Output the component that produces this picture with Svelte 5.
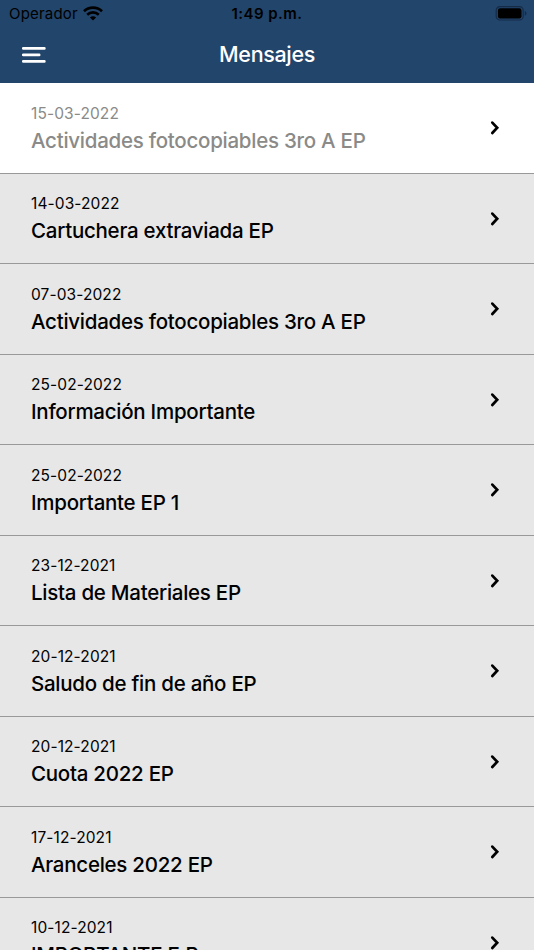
<script>
    const messages = [
        { date: '15-03-2022', title: 'Actividades fotocopiables 3ro A EP', read: true },
        { date: '14-03-2022', title: 'Cartuchera extraviada EP' },
        { date: '07-03-2022', title: 'Actividades fotocopiables 3ro A EP' },
        { date: '25-02-2022', title: 'Información Importante' },
        { date: '25-02-2022', title: 'Importante EP 1' },
        { date: '23-12-2021', title: 'Lista de Materiales EP' },
        { date: '20-12-2021', title: 'Saludo de fin de año EP' },
        { date: '20-12-2021', title: 'Cuota 2022 EP' },
        { date: '17-12-2021', title: 'Aranceles 2022 EP' },
        { date: '10-12-2021', title: 'IMPORTANTE E.P.' },
    ];
</script>

<div class="screen">
    <header>
        <div class="status">
            <div class="carrier">
                <span>Operador</span>
                <svg width="20" height="15" viewBox="0 0 20 15" aria-hidden="true">
                    <g fill="none" stroke="#000" stroke-width="2.7">
                        <path d="M1 5.3C6 .5 14 .5 19 5.3" />
                        <path d="M4.2 8.7C7.5 5.6 12.5 5.6 15.8 8.7" />
                    </g>
                    <path d="M6.9 11.4C8.7 9.8 11.3 9.8 13.1 11.4L10 14.4Z" />
                </svg>
            </div>
            <span class="time">1:49 p.m.</span>
            <svg class="battery" width="32" height="15" viewBox="0 0 32 15" aria-hidden="true">
                <rect x="1.2" y=".6" width="27" height="13.4" rx="3.8" fill="none" stroke="#152b46" stroke-width="1.2" />
                <rect x="2.9" y="2.2" width="23.6" height="10.2" rx="2.2" />
                <path d="M29.8 5v4.7c2.3-.9 2.3-3.8 0-4.7z" fill="#152b46" />
            </svg>
        </div>
        <div class="toolbar">
            <button class="menu" aria-label="Menú">
                <svg width="24" height="18" viewBox="0 0 24 18">
                    <path d="M1.2 2.4h21.2M1.2 8.9h16M1.2 15.4h21.2" fill="none" stroke="#fff" stroke-width="2.6" stroke-linecap="round" />
                </svg>
            </button>
            <h1>Mensajes</h1>
        </div>
    </header>

    <ul>
        {#each messages as message}
            <li class:read={message.read}>
                <div class="text">
                    <span class="date">{message.date}</span>
                    <span class="title">{message.title}</span>
                </div>
                <svg width="10" height="15" viewBox="0 0 10 15" aria-hidden="true">
                    <path d="M2.3 2.6L7.2 7.8L2.3 13" fill="none" stroke="#000" stroke-width="2.7" stroke-linecap="round" />
                </svg>
            </li>
        {/each}
    </ul>
</div>

<style>
    :global(body) {
        margin: 0;
        overflow: hidden;
    }

    .screen {
        height: 950px;
        overflow: hidden;
        background: #e7e7e7;
        font-family: Inter, "Liberation Sans", sans-serif;
        color: #000;
    }

    header {
        height: 83px;
        background: #22456c;
    }

    .status {
        display: grid;
        grid-template-columns: 1fr auto 1fr;
        align-items: center;
        height: 27px;
        padding: 0 7px 0 9px;
        font-size: 15px;
        line-height: 27px;
    }

    .carrier {
        display: flex;
        align-items: center;
        gap: 5px;
        letter-spacing: 0.2px;
    }

    .time {
        margin-right: 2px;
        font-weight: 600;
        letter-spacing: 0.45px;
    }

    .battery {
        justify-self: end;
    }

    .toolbar {
        display: grid;
        grid-template-columns: 1fr auto 1fr;
        align-items: center;
        height: 55px;
        padding: 0 22px;
    }

    .menu {
        display: flex;
        width: 24px;
        padding: 0;
        border: none;
        background: none;
    }

    h1 {
        margin: 0;
        font-size: 21.5px;
        font-weight: 550;
        line-height: 55px;
        letter-spacing: -0.35px;
        color: #fff;
    }

    ul {
        margin: 0;
        padding: 0;
        list-style: none;
    }

    li {
        display: flex;
        justify-content: space-between;
        align-items: center;
        box-sizing: border-box;
        height: 90.5px;
        padding: 0 34px 0 31px;
        border-bottom: 1px solid #999;
    }

    .read {
        background: #fff;
    }

    .read .text {
        color: #8a8a88;
    }

    .text {
        display: flex;
        flex-direction: column;
        padding-top: 3px;
        white-space: nowrap;
    }

    .date {
        font-size: 15.5px;
        line-height: 22px;
        letter-spacing: 0.1px;
    }

    .title {
        font-size: 20.5px;
        line-height: 31px;
        font-weight: 450;
        letter-spacing: -0.26px;
    }
</style>
